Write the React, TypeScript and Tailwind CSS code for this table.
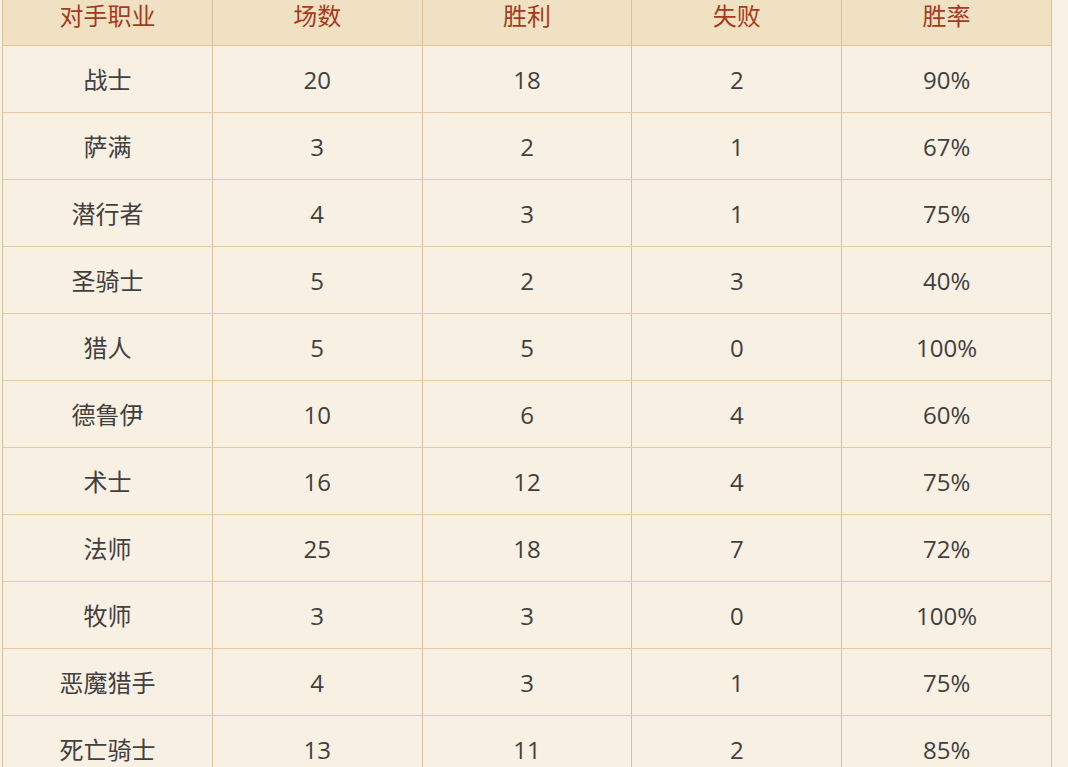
import React from "react";

const rows: string[][] = [
  ["战士", "20", "18", "2", "90%"],
  ["萨满", "3", "2", "1", "67%"],
  ["潜行者", "4", "3", "1", "75%"],
  ["圣骑士", "5", "2", "3", "40%"],
  ["猎人", "5", "5", "0", "100%"],
  ["德鲁伊", "10", "6", "4", "60%"],
  ["术士", "16", "12", "4", "75%"],
  ["法师", "25", "18", "7", "72%"],
  ["牧师", "3", "3", "0", "100%"],
  ["恶魔猎手", "4", "3", "1", "75%"],
  ["死亡骑士", "13", "11", "2", "85%"],
];

const headers = ["对手职业", "场数", "胜利", "失败", "胜率"];

export default function App() {
  return (
    <div
      className="w-[1068px] h-[767px] overflow-hidden bg-[#f8f1e5]"
      style={{ fontFamily: '"Open Sans", "Noto Sans CJK SC", sans-serif' }}
    >
      <div className="mt-[-16px] ml-[2px] w-[1050px] border-l border-[#d6c19c]">
        <div className="grid grid-cols-5 bg-[#f1e1c3] border-b border-[#e6c59c]">
          {headers.map((h) => (
            <div
              key={h}
              className="h-[61px] pt-[2px] flex items-center justify-center text-[24px] text-[#a53a1e] border-r border-[#d6c19c]"
            >
              {h}
            </div>
          ))}
        </div>
        {rows.map((r, i) => (
          <div key={i} className="grid grid-cols-5 border-b border-[#e9c9a0] bg-[#f8f0e3]">
            {r.map((c, j) => (
              <div
                key={j}
                className="h-[66px] pt-[2px] flex items-center justify-center text-[24px] text-[#404040] border-r border-[#d6c19c]"
              >
                {c}
              </div>
            ))}
          </div>
        ))}
      </div>
    </div>
  );
}
